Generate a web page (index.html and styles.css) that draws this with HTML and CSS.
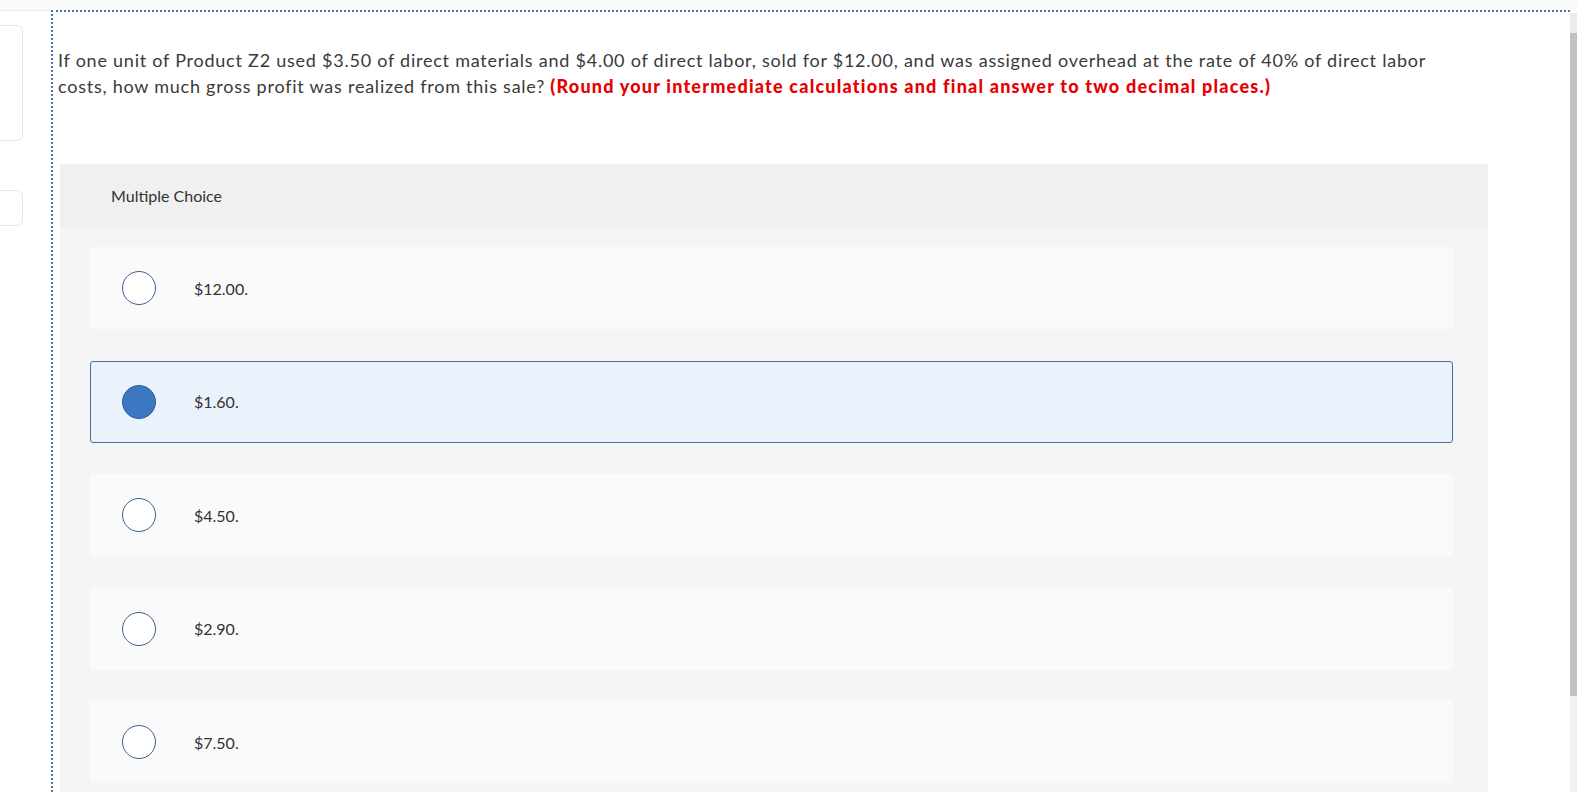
FILE: index.html
```html
<!DOCTYPE html>
<html>
<head>
<meta charset="utf-8">
<link rel="stylesheet" href="styles.css">
</head>
<body>
<div class="topstrip"></div>
<div class="page">
  <aside class="side">
    <div class="side-card tall"></div>
    <div class="side-card short"></div>
  </aside>
  <main class="content">
    <p class="question">If one unit of Product Z2 used $3.50 of direct materials and $4.00 of direct labor, sold for $12.00, and was assigned overhead at the rate of 40% of direct labor costs, how much gross profit was realized from this sale? <strong class="hint">(Round your intermediate calculations and final answer to two decimal places.)</strong></p>
    <section class="panel">
      <div class="panel-head">Multiple Choice</div>
      <div class="panel-body">
        <div class="option"><span class="radio"></span><span class="label">$12.00.</span></div>
        <div class="option selected"><span class="radio"></span><span class="label">$1.60.</span></div>
        <div class="option"><span class="radio"></span><span class="label">$4.50.</span></div>
        <div class="option"><span class="radio"></span><span class="label">$2.90.</span></div>
        <div class="option"><span class="radio"></span><span class="label">$7.50.</span></div>
      </div>
    </section>
  </main>
</div>
<div class="scrollbar"><div class="sb-arrow"></div><div class="sb-thumb"></div></div>
</body>
</html>
```
FILE: styles.css
```css
html, body {
  margin: 0;
  padding: 0;
  background: #ffffff;
  height: 792px;
  overflow: hidden;
  font-family: Lato, "Liberation Sans", sans-serif;
  color: #333333;
}
.topstrip {
  height: 10px;
  background: #fbfafb;
}
.page {
  display: flex;
  height: 782px;
}
.side {
  width: 51px;
  flex: none;
  border-top: 1px solid #e8e8e8;
  box-sizing: border-box;
  padding-top: 14px;
  display: flex;
  flex-direction: column;
  gap: 49px;
}
.side-card {
  width: 23px;
  box-sizing: border-box;
  border: 1px solid #e6e6e6;
  border-left: none;
  border-radius: 0 6px 6px 0;
  background: #fff;
}
.side-card.tall { height: 116px; }
.side-card.short { height: 36px; }
.content {
  flex: 1;
  border-top: 2px dotted #4f74a3;
  border-left: 2px dotted #4f74a3;
  padding: 0 0 0 5px;
  margin-right: 7px;
}
.question {
  margin: 35px 0 0 0;
  font-size: 18px;
  line-height: 26px;
  max-width: 1400px;
  letter-spacing: 0.76px;
  color: #3a3a3a;
}
.hint {
  color: #e60000;
  font-weight: 900;
  letter-spacing: 1.2px;
}
.panel {
  margin: 65px 0 0 2px;
  width: 1428px;
  background: #f5f5f5;
}
.panel-head {
  height: 63px;
  background: #f0f0f0;
  box-sizing: border-box;
  padding-left: 51px;
  display: flex;
  align-items: center;
  font-size: 16px;
  color: #333;
}
.panel-body {
  padding: 20px 35px 20px 30px;
  display: flex;
  flex-direction: column;
  gap: 31.5px;
}
.option {
  height: 82px;
  box-sizing: border-box;
  background: #fafafa;
  border: 1px solid #fafafa;
  border-radius: 3px;
  display: flex;
  align-items: center;
  padding-left: 31px;
}
.option.selected {
  background: #eaf2fb;
  border-color: #4a6f9e;
}
.radio {
  width: 34px;
  height: 34px;
  box-sizing: border-box;
  border: 1px solid #3a5f8c;
  border-radius: 50%;
  background: #fff;
  flex: none;
}
.option.selected .radio {
  background: #3b78c1;
  border-color: #2f5f99;
}
.label {
  margin-left: 38px;
  font-size: 16px;
  letter-spacing: 0;
  color: #333;
}
.scrollbar {
  position: fixed;
  right: 0;
  top: 13px;
  width: 7px;
  height: 779px;
  background: #f1f1f1;
}
.sb-arrow {
  height: 20px;
  background: #ebebeb;
}
.sb-thumb {
  height: 663px;
  background: #c1c1c1;
}
```
